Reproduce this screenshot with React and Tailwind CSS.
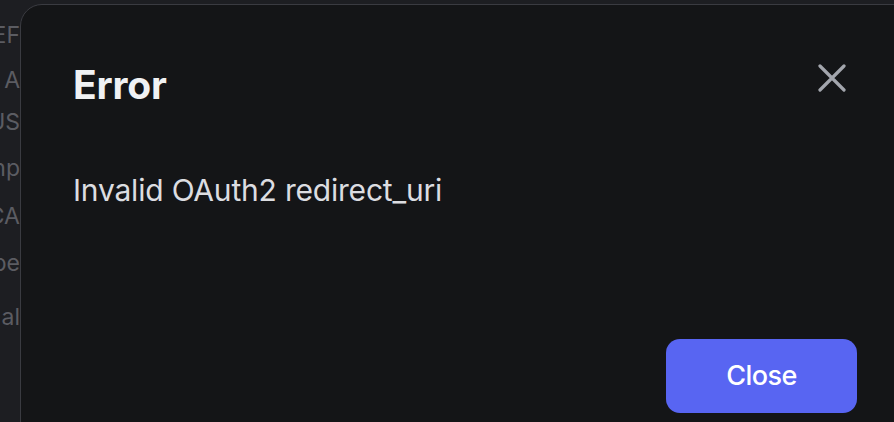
import React from 'react';

// bits of the page that peek out left of the modal
const bgLines = [
    { text: 'EF', cls: 'mt-[21px]' },
    { text: 'A', cls: 'mt-[17px]' },
    { text: 'US', cls: 'mt-[14px]' },
    { text: 'np', cls: 'mt-[18px]' },
    { text: 'CA', cls: 'mt-[20px]' },
    { text: 'pe', cls: 'mt-[19px]' },
    { text: 'al', cls: 'mt-[26px]' },
];

function CloseIcon() {
    return (
        <svg width="28" height="28" viewBox="0 0 28 28" fill="none">
            <path d="M2 2L26 26M26 2L2 26" stroke="#a3a6ad" strokeWidth="3.2" strokeLinecap="round" />
        </svg>
    );
}

export default function App() {
    return (
        <div className="relative w-[894px] h-[422px] overflow-hidden bg-[#1d1e22]" style={{ fontFamily: 'Inter, "Noto Sans", sans-serif' }}>
            {/* page behind the modal */}
            <div className="w-[20px] overflow-hidden flex flex-col text-[23px] leading-[28px] text-[#5b5c62] whitespace-nowrap">
                {bgLines.map((l) => (
                    <div key={l.text} className={`flex justify-end ${l.cls}`}>{l.text}</div>
                ))}
            </div>

            {/* modal */}
            <div className="absolute left-[20px] top-[4px] w-[900px] h-[440px] rounded-tl-[22px] border border-[#3a3b41] bg-[#141517] flex flex-col pl-[52px] pr-[73px]">
                <div className="flex items-start justify-between pt-[56px]">
                    <h2 className="text-[39px] leading-[48px] font-bold text-[#f0f1f3] tracking-[-0.2px]">Error</h2>
                    <button className="mt-[3px]">
                        <CloseIcon />
                    </button>
                </div>
                <p className="mt-[63px] text-[30px] leading-[36px] text-[#dcdde1] tracking-[-0.2px]">Invalid OAuth2 redirect_uri</p>
                <div className="flex justify-end mt-[131px] -mr-[11px]">
                    <button className="w-[191px] h-[74px] rounded-[14px] bg-[#5865f2] text-white text-[27px] font-medium tracking-[-0.6px]">
                        Close
                    </button>
                </div>
            </div>
        </div>
    );
}
